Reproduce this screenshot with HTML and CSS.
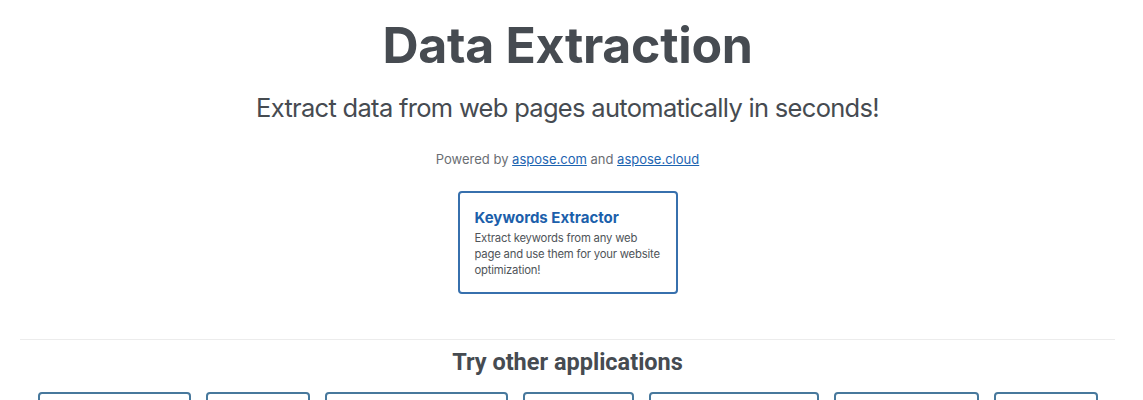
FILE: index.html
```html
<!DOCTYPE html>
<html>
	<head>
		<meta charset="UTF-8">
		<title>Data Extraction</title>
		<link rel="stylesheet" href="styles.css">
	</head>
	<body>
		<div class="page">
			<div class="hero">
				<h1 class="hero-title">Data Extraction</h1>
				<h2 class="hero-subtitle">Extract data from web pages automatically in seconds!</h2>
				<p class="powered">Powered by <a href="#">aspose.com</a> and <a href="#">aspose.cloud</a></p>
				<a class="app-card" href="#">
					<span class="app-card-title">Keywords Extractor</span>
					<span class="app-card-text">Extract keywords from any web page and use them for your website optimization!</span>
				</a>
			</div>
			<div class="other">
				<h3 class="other-title">Try other applications</h3>
				<div class="other-list">
					<a class="other-item w1" href="#">Conversion</a>
					<a class="other-item w2" href="#">Merger</a>
					<a class="other-item w3" href="#">Webpage to PDF</a>
					<a class="other-item w4" href="#">Editor</a>
					<a class="other-item w5" href="#">Screenshot</a>
					<a class="other-item w6" href="#">Translation</a>
					<a class="other-item w7" href="#">Viewer</a>
				</div>
			</div>
		</div>
	</body>
</html>
```

FILE: styles.css
```css
body
	{
		margin: 0;
		font-family: Inter, "Liberation Sans", sans-serif;
		color: #464b51;
		background: #fff;
	}
.page
	{
		margin-right: 8px;
	}
.hero
	{
		display: flex;
		flex-direction: column;
		align-items: center;
		padding-top: 15px;
	}
.hero-title
	{
		margin: 0;
		font-size: 50px;
		font-weight: 700;
		line-height: 60px;
		letter-spacing: -0.3px;
	}
.hero-subtitle
	{
		margin: 17px 0 0;
		font-size: 25.5px;
		font-weight: 400;
		line-height: 32px;
		letter-spacing: -0.7px;
	}
.powered
	{
		margin: 26px 0 0;
		font-size: 13px;
		line-height: 18px;
		color: #6a6e73;
	}
.powered a
	{
		color: #1d64b1;
	}
.app-card
	{
		display: flex;
		flex-direction: column;
		box-sizing: border-box;
		width: 220px;
		height: 103px;
		margin-top: 23px;
		padding: 15px 12px 0 15px;
		border: 2px solid #3770ad;
		border-radius: 4px;
		text-decoration: none;
	}
.app-card-title
	{
		font-size: 15px;
		font-weight: 700;
		line-height: 20px;
		color: #1c5fab;
	}
.app-card-text
	{
		margin-top: 2px;
		font-size: 11.3px;
		line-height: 16px;
		color: #4f5459;
		letter-spacing: -0.2px;
	}
.other
	{
		margin: 45px 20px 0;
		border-top: 1px solid #ececec;
	}
.other-title
	{
		margin: 8px 0 0;
		text-align: center;
		font-family: Roboto, "Liberation Sans", sans-serif;
		font-size: 23.5px;
		font-weight: 700;
		line-height: 28px;
	}
.other-list
	{
		display: flex;
		justify-content: center;
		gap: 15px;
		margin-top: 16px;
	}
.other-item
	{
		box-sizing: border-box;
		height: 60px;
		padding: 20px 15px;
		border: 2px solid #47789c;
		border-radius: 4px;
		color: #1c5fab;
		font-weight: 700;
		text-decoration: none;
	}
.w1 { width: 153px; }
.w2 { width: 104px; }
.w3 { width: 183px; }
.w4 { width: 111px; }
.w5 { width: 170px; }
.w6 { width: 145px; }
.w7 { width: 104px; }
```
